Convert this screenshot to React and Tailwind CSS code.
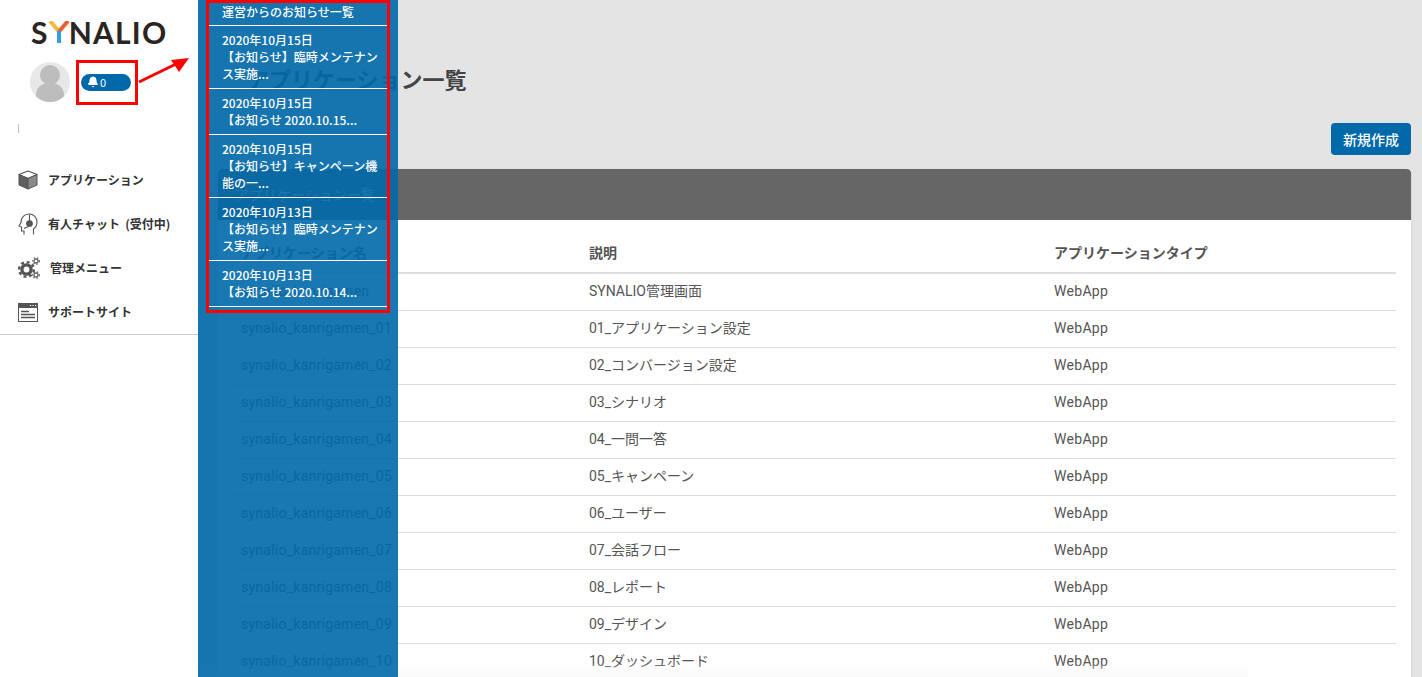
import { Bell } from "lucide-react"

const font = { fontFamily: '"Noto Sans CJK JP", sans-serif' }

const rows = [
  ["synalio_kanrigamen", "SYNALIO管理画面"],
  ["synalio_kanrigamen_01", "01_アプリケーション設定"],
  ["synalio_kanrigamen_02", "02_コンバージョン設定"],
  ["synalio_kanrigamen_03", "03_シナリオ"],
  ["synalio_kanrigamen_04", "04_一問一答"],
  ["synalio_kanrigamen_05", "05_キャンペーン"],
  ["synalio_kanrigamen_06", "06_ユーザー"],
  ["synalio_kanrigamen_07", "07_会話フロー"],
  ["synalio_kanrigamen_08", "08_レポート"],
  ["synalio_kanrigamen_09", "09_デザイン"],
  ["synalio_kanrigamen_10", "10_ダッシュボード"],
]

const notices = [
  ["2020年10月15日", "【お知らせ】臨時メンテナンス実施..."],
  ["2020年10月15日", "【お知らせ 2020.10.15..."],
  ["2020年10月15日", "【お知らせ】キャンペーン機能の一..."],
  ["2020年10月13日", "【お知らせ】臨時メンテナンス実施..."],
  ["2020年10月13日", "【お知らせ 2020.10.14..."],
]

function CubeIcon() {
  return (
    <svg width="20" height="20" viewBox="0 0 20 20">
      <path d="M10 1 L19 4.5 L10 8.5 L1 4.5 Z" fill="#fff" stroke="#555" strokeWidth="1.3" strokeLinejoin="round" />
      <path d="M1 4.5 L10 8.5 V19 L1 15 Z" fill="#5f5f5f" stroke="#555" strokeWidth="1" strokeLinejoin="round" />
      <path d="M19 4.5 L10 8.5 V19 L19 15 Z" fill="#8a8a8a" stroke="#555" strokeWidth="1" strokeLinejoin="round" />
    </svg>
  )
}

function HeadIcon() {
  return (
    <svg width="20" height="22" viewBox="0 0 20 22" fill="none" stroke="#555" strokeWidth="1.1">
      <path d="M6 21.5 V18 H3.5 V14 L1 13 L3 9.5 C2.8 4.5 6.5 1 11 1 C15.8 1 19 4.5 19 9 C19 12 17.5 14.5 15.5 16 V21.5" />
      <path d="M11.5 1.5 V9" />
      <circle cx="11.5" cy="10.5" r="2.8" fill="#555" />
      <path d="M11 13.2 L6 15.5" />
    </svg>
  )
}

function GearsIcon() {
  return (
    <svg width="22" height="22" viewBox="0 0 22 22">
      <circle cx="8.5" cy="12.5" r="4.6" fill="none" stroke="#555" strokeWidth="3.4" />
      <circle cx="8.5" cy="12.5" r="7.4" fill="none" stroke="#555" strokeWidth="2.4" strokeDasharray="3 2.8" />
      <circle cx="18" cy="4" r="2" fill="none" stroke="#666" strokeWidth="1.3" />
      <circle cx="18" cy="4" r="3.3" fill="none" stroke="#666" strokeWidth="1.2" strokeDasharray="1.5 1.7" />
      <circle cx="18" cy="18" r="2" fill="none" stroke="#666" strokeWidth="1.3" />
      <circle cx="18" cy="18" r="3.3" fill="none" stroke="#666" strokeWidth="1.2" strokeDasharray="1.5 1.7" />
    </svg>
  )
}

function WindowIcon() {
  return (
    <svg width="20" height="19" viewBox="0 0 20 19">
      <rect x="0.5" y="0.5" width="19" height="18" fill="#fff" stroke="#555" />
      <rect x="0.5" y="0.5" width="19" height="4.5" fill="#555" />
      <path d="M12 2.5h1.2M14.5 2.5h1.2M17 2.5h1.2" stroke="#fff" />
      <path d="M3 8.5h8M3 11.5h14M3 14.5h14" stroke="#555" strokeWidth="1.4" />
    </svg>
  )
}

function Sidebar() {
  const items = [
    [<CubeIcon key="i" />, "アプリケーション", ""],
    [<HeadIcon key="i" />, "有人チャット  (受付中)", ""],
    [<GearsIcon key="i" />, "管理メニュー", "ml-[2px]"],
    [<WindowIcon key="i" />, "サポートサイト", ""],
  ]
  return (
    <aside className="w-[198px] shrink-0 bg-white">
      <div className="flex items-center pl-[31px] pt-[15px] h-[34px] box-content text-[30px] font-bold leading-none tracking-[1.2px] text-[#2b2522]" style={{ fontFamily: "Lato, sans-serif" }}>
        <span>S</span>
        <svg width="22" height="22" viewBox="0 0 22 22" className="mx-[-1px]">
          <path d="M2 0 L11 10.5" stroke="#f5b93a" strokeWidth="4" />
          <path d="M20 0 L11 10.5" stroke="#ee5f32" strokeWidth="4" />
          <path d="M11 10 V22" stroke="#2f9fe6" strokeWidth="4" />
        </svg>
        <span>NALIO</span>
      </div>
      <div className="flex items-center pl-[30px] mt-[13px] gap-[11px]">
        <div className="relative w-10 h-10 rounded-full bg-[#e8e8e8] overflow-hidden">
          <div className="absolute left-[10px] top-[3px] w-5 h-5 rounded-full bg-[#bdbdbd]" />
          <div className="absolute left-[6px] top-[21px] w-7 h-6 rounded-full bg-[#bdbdbd]" />
        </div>
        <div className="flex items-center w-[50px] h-[17px] rounded-full bg-[#0069aa] pl-[6px] text-white text-[11px]">
          <Bell size={12} fill="#fff" strokeWidth={2} />
          <span className="ml-[1px]">0</span>
        </div>
      </div>
      <div className="w-px h-[9px] bg-[#bbb] ml-[18px] mt-[22px]" />
      <nav className="mt-[25px] border-b border-[#ccc]">
        {items.map(([icon, label, extra]) => (
          <div key={label} className="flex items-center h-[44px] pl-[18px]">
            <span className="w-[30px] flex">{icon}</span>
            <span className={`text-[12px] font-bold text-[#333] whitespace-pre ${extra}`}>{label}</span>
          </div>
        ))}
      </nav>
    </aside>
  )
}

function NoticePanel() {
  return (
    <div className="absolute left-[198px] top-0 bottom-0 w-[200px] bg-[#0069aa]/90 text-white px-[8px]">
      <div className="border-[3px] border-[#f00] w-[184px] h-[313px]">
        <div className="h-[23px] pl-[13px] text-[12px] font-medium leading-[17px] border-b border-white">
          運営からのお知らせ一覧
        </div>
        {notices.map(([date, text], i) => (
          <div key={i} className="border-b border-white pl-[13px] pr-[6px] pt-[5px] pb-[6px] text-[12px] font-medium leading-[17px]">
            <div>{date}</div>
            <div>{text}</div>
          </div>
        ))}
      </div>
    </div>
  )
}

function Annotations() {
  return (
    <>
      <div className="absolute left-[76px] top-[60px] w-[62px] h-[45px] border-[3px] border-[#f00]" />
      <svg className="absolute left-[136px] top-[54px]" width="56" height="32" viewBox="0 0 56 32">
        <path d="M3 28 L40 10" stroke="#f00" strokeWidth="3" />
        <path d="M53 4 L35 6 L43 18 Z" fill="#f00" />
      </svg>
    </>
  )
}

export default function App() {
  return (
    <div className="relative flex h-screen overflow-hidden bg-[#e4e4e4]" style={font}>
      <Sidebar />
      <main className="flex-1 min-w-0 pl-[20px] pr-[11px]">
        <h1 className="mt-[62px] ml-[29px] text-[22px] font-bold leading-[32px] text-[#444]">アプリケーション一覧</h1>
        <div className="flex justify-end mt-[29px]">
          <button className="w-[80px] h-[32px] rounded bg-[#0069aa] text-white text-[14px] font-medium">新規作成</button>
        </div>
        <section className="mt-[14px] rounded-t bg-white shadow h-[520px] overflow-hidden">
          <div className="h-[51px] bg-[#666] pl-[17px] flex items-center text-[14px] text-white rounded-t">アプリケーション一覧</div>
          <div className="px-[15px] pt-[17px]">
            <table className="w-full text-[14px] text-[#555] table-fixed" style={{ fontFamily: 'Roboto, "Noto Sans CJK JP", sans-serif' }}>
              <thead>
                <tr className="border-b-2 border-[#ddd] h-[36px] text-left">
                  <th className="font-bold pl-[8px] w-[356px] pb-[2px]">アプリケーション名</th>
                  <th className="font-bold w-[465px] pb-[2px]">説明</th>
                  <th className="font-bold pb-[2px]">アプリケーションタイプ</th>
                </tr>
              </thead>
              <tbody>
                {rows.map(([name, desc]) => (
                  <tr key={name} className="border-b border-[#ddd] h-[37px]">
                    <td className="pl-[8px] tracking-[0.25px]">{name}</td>
                    <td>{desc}</td>
                    <td className="tracking-[0.3px]">WebApp</td>
                  </tr>
                ))}
              </tbody>
            </table>
          </div>
        </section>
      </main>
      <div className="absolute bottom-0 left-[198px] w-[1050px] h-[14px] bg-gradient-to-b from-transparent to-[#f9f9f9]" />
      <NoticePanel />
      <Annotations />
    </div>
  )
}
